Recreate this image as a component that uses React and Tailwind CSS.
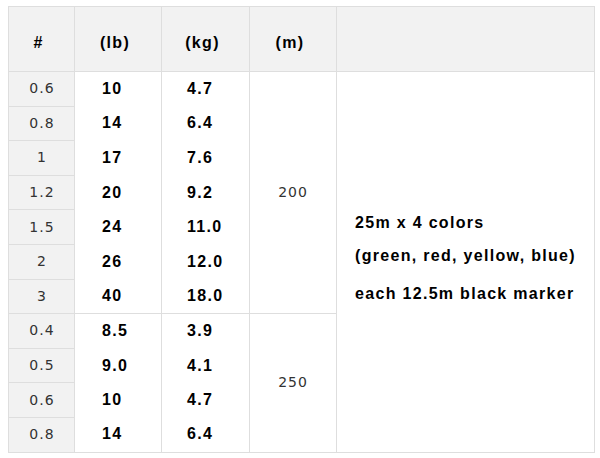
import React from "react";

const bold = "font-['Liberation_Sans',Arial,sans-serif] font-bold text-[16px] tracking-[1.3px] text-black";
const plain = "font-['DejaVu_Sans',Verdana,sans-serif] text-[14px] tracking-[1px] text-[#333]";

const groups = [
  {
    length: 200,
    rows: [
      ["0.6", "10", "4.7"],
      ["0.8", "14", "6.4"],
      ["1", "17", "7.6"],
      ["1.2", "20", "9.2"],
      ["1.5", "24", "11.0"],
      ["2", "26", "12.0"],
      ["3", "40", "18.0"],
    ],
  },
  {
    length: 250,
    rows: [
      ["0.4", "8.5", "3.9"],
      ["0.5", "9.0", "4.1"],
      ["0.6", "10", "4.7"],
      ["0.8", "14", "6.4"],
    ],
  },
];

const totalRows = groups.reduce((n, g) => n + g.rows.length, 0);

function HeadCell({ children, className = "" }) {
  return (
    <th className={`border border-[#dedede] bg-[#f2f2f2] pt-[7px] pr-[6px] text-center align-middle ${bold} ${className}`}>
      {children}
    </th>
  );
}

export default function App() {
  return (
    <div className="min-h-[458px] w-[600px] bg-white pl-[8px] pt-[6px]">
      <table className="w-[586px] table-fixed border-collapse">
        <colgroup>
          <col className="w-[66px]" />
          <col className="w-[87px]" />
          <col className="w-[88px]" />
          <col className="w-[87px]" />
          <col className="w-[258px]" />
        </colgroup>
        <thead>
          <tr className="h-[65px]">
            <HeadCell>#</HeadCell>
            <HeadCell>(lb)</HeadCell>
            <HeadCell>(kg)</HeadCell>
            <HeadCell>(m)</HeadCell>
            <HeadCell />
          </tr>
        </thead>
        <tbody>
          {groups.map((group, gi) =>
            group.rows.map(([size, lb, kg], ri) => {
              const last = ri === group.rows.length - 1;
              const edge = last ? "border-b border-b-[#dedede]" : "border-b-0";
              return (
                <tr key={`${gi}-${ri}`} className="h-[34.6px]">
                  <td className={`border border-[#dedede] bg-[#f2f2f2] p-0 pl-[1px] text-center align-middle ${plain}`}>
                    {size}
                  </td>
                  <td className={`border-x border-[#dedede] ${edge} p-0 pl-[27px] align-middle ${bold}`}>{lb}</td>
                  <td className={`border-x border-[#dedede] ${edge} p-0 pl-[25px] align-middle ${bold}`}>{kg}</td>
                  {ri === 0 ? (
                    <td
                      rowSpan={group.rows.length}
                      className={`border border-[#dedede] p-0 text-center align-middle ${plain}`}
                    >
                      {group.length}
                    </td>
                  ) : null}
                  {gi === 0 && ri === 0 ? (
                    <td rowSpan={totalRows} className="border border-[#dedede] p-0 pb-[8px] align-middle">
                      <div className="flex justify-center">
                        <div className={`text-left ${bold}`}>
                          <div className="leading-[33px]">25m x 4 colors</div>
                          <div className="leading-[33px]">(green, red, yellow, blue)</div>
                          <div className="mt-[5px] leading-[33px]">each 12.5m black marker</div>
                        </div>
                      </div>
                    </td>
                  ) : null}
                </tr>
              );
            })
          )}
        </tbody>
      </table>
    </div>
  );
}
